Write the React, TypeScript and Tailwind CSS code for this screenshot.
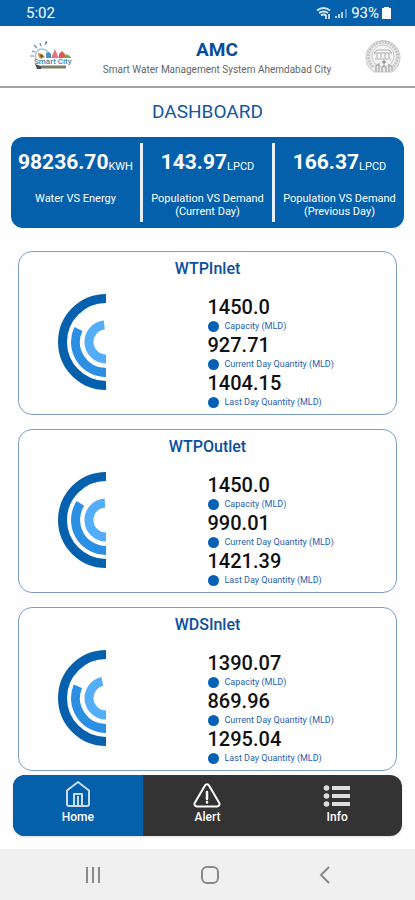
import React from "react";

type Station = { name: string; capacity: string; current: string; last: string };

const summary = [
  { value: "98236.70", unit: "KWH", lines: ["Water VS Energy"] },
  { value: "143.97", unit: "LPCD", lines: ["Population VS Demand", "(Current Day)"] },
  { value: "166.37", unit: "LPCD", lines: ["Population VS Demand", "(Previous Day)"] },
];

const stations: Station[] = [
  { name: "WTPInlet", capacity: "1450.0", current: "927.71", last: "1404.15" },
  { name: "WTPOutlet", capacity: "1450.0", current: "990.01", last: "1421.39" },
  { name: "WDSInlet", capacity: "1390.07", current: "869.96", last: "1295.04" },
];

// Arc running clockwise from the bottom of the half ring
function arc(radius: number, share: number) {
  const a = Math.PI * share;
  const x = 48 - radius * Math.sin(a);
  const y = 48 + radius * Math.cos(a);
  return `M48 ${48 + radius} A${radius} ${radius} 0 0 1 ${x.toFixed(2)} ${y.toFixed(2)}`;
}

function HalfRings({ station }: { station: Station }) {
  const capacity = Number(station.capacity);
  return (
    <svg width="48" height="96" viewBox="0 0 48 96" fill="none" strokeWidth="9" role="img" aria-label={station.name}>
      <path d={arc(43.5, 1)} stroke="#0560ad" />
      <path d={arc(30.5, Number(station.current) / capacity)} stroke="#2b8fe3" />
      <path d={arc(17, Number(station.last) / capacity)} stroke="#53adf8" />
    </svg>
  );
}

function Reading({ value, label }: { value: string; label: string }) {
  return (
    <div>
      <dd className="text-xl leading-6 font-medium text-[#111111]">{value}</dd>
      <dt className="flex h-[14px] items-center gap-[6px] text-[9px] leading-3 text-[#1f5fae]">
        <span className="size-[11px] shrink-0 rounded-full bg-[#0560b4]" />
        {label}
      </dt>
    </div>
  );
}

function StationCard({ station }: { station: Station }) {
  return (
    <section className="h-[164px] rounded-[14px] border border-[#7d9cc8] bg-white pt-[7px]">
      <h2 className="text-center text-base leading-5 font-medium text-[#0b4fa0]">{station.name}</h2>
      <div className="mt-[15px] grid grid-cols-2">
        <div className="pl-[39px]">
          <HalfRings station={station} />
        </div>
        <dl className="pt-px">
          <Reading value={station.capacity} label="Capacity (MLD)" />
          <Reading value={station.current} label="Current Day Quantity (MLD)" />
          <Reading value={station.last} label="Last Day Quantity (MLD)" />
        </dl>
      </div>
    </section>
  );
}

function CityLogo() {
  return (
    <svg width="44" height="30" viewBox="0 0 44 30" fill="none" aria-hidden="true">
      <path d="M2 10l3 1M4 4l3 3M10 2l1 3M17 1l-2 3M0 15h4" stroke="#6b8fa8" strokeWidth="1.2" />
      <path d="M6 18c-2-5 1-10 6-10 3 0 5 1 6 4" stroke="#a9c9dc" strokeWidth="1.4" />
      <path d="M15 1l2-1-1 3z" fill="#45738c" />
      <path d="M8 12l4 1 3 3-4 2c-2-1-3-3-3-6z" fill="#e58535" />
      <path d="M10 13l4 2-3 2z" fill="#36713a" />
      <path d="M16 17v-5l3-1 2 2v4z" fill="#4c91bd" />
      <path d="M21 17l4-9 4 9z" fill="#e27883" />
      <path d="M29 17v-4l3-3 3 3v4z" fill="#d75e57" />
      <path d="M34 17l2-4 4 2 1 2z" fill="#76aa53" />
      <text x="4" y="23" fontFamily="Roboto, sans-serif" fontSize="8" fontWeight="500" fill="#3f7fae">Smart City</text>
      <path d="M5 23l2 5h4v-3z" fill="#465154" />
      <path d="M11 24.500h25v3H11z" fill="#7b7f61" />
    </svg>
  );
}

function Seal() {
  return (
    <svg width="38" height="38" viewBox="0 0 38 38" fill="none" stroke="#b0b0b0" aria-hidden="true">
      <path d="M10 35A17 17 0 1 1 28 35z" fill="#ececec" stroke="#c8c8c8" />
      <path d="M9 30A14.500 14.500 0 1 1 29 30" strokeWidth="3" strokeDasharray="2 1" stroke="#c6c6c6" />
      <circle cx="19" cy="19" r="11" fill="#f4f4f4" stroke="#cccccc" />
      <path d="M10 16l3-3h12l3 3zM13 16v5M17 16v5M21 16v5M25 16v5M11 22h16" />
      <path d="M12 35v-6l3-2v8M18 35v-4l2-3 2 3v4M25 35v-7l3 2v4" strokeWidth="1.500" />
      <path d="M18 25l2-2 2 2-2 2z" fill="#999999" />
    </svg>
  );
}

function StatusIcons() {
  return (
    <svg width="31" height="14" viewBox="0 0 31 14" fill="none" aria-hidden="true">
      <path d="M1 4.500q6.500-5 13 0M3 7q4.500-3 9 0M5 9.500q2.500-2 5 0" stroke="#d7e6f4" strokeWidth="2" />
      <path d="M10 13V9M13 13V8" stroke="#ffffff" strokeWidth="1.500" />
      <path d="M20 12v-2M23 12V8M26 12V6" stroke="#c7dcef" strokeWidth="1.800" />
      <path d="M30 12V3" stroke="#5e99cb" strokeWidth="2" />
    </svg>
  );
}

function HomeIcon() {
  return (
    <svg width="28" height="28" viewBox="0 0 28 28" fill="none" stroke="#c6ddf5" strokeWidth="2" strokeLinejoin="round" aria-hidden="true">
      <path d="M3 10.500L14 2l11 8.500V24a2 2 0 0 1-2 2H5a2 2 0 0 1-2-2z" />
      <path d="M10 26V14h8v12M14 16v10" />
    </svg>
  );
}

function AlertIcon() {
  return (
    <svg width="28" height="28" viewBox="0 0 28 28" fill="none" stroke="#ffffff" strokeWidth="2" strokeLinecap="round" strokeLinejoin="round" aria-hidden="true">
      <path d="M12 5.500a2.300 2.300 0 0 1 4 0L26 22.500a2.500 2.500 0 0 1-2 4H4a2.500 2.500 0 0 1-2-4z" />
      <path d="M14 12v7M14 22v.5" strokeWidth="2.500" />
    </svg>
  );
}

function ListIcon() {
  return (
    <svg width="28" height="28" viewBox="0 0 28 28" fill="#dedede" aria-hidden="true">
      <circle cx="3.500" cy="8" r="2.800" />
      <circle cx="3.500" cy="16" r="2.800" />
      <circle cx="3.500" cy="24" r="2.800" />
      <path d="M9 6h18v4H9zM9 14h18v4H9zM9 22h18v4H9z" />
    </svg>
  );
}

export default function App() {
  return (
    <div className="flex min-h-screen flex-col bg-[#fefefe] font-['Roboto','Liberation_Sans',sans-serif]">
      <div className="flex h-[26px] items-center justify-between bg-[#0560ac] pr-6 pl-[26px] text-[15px] text-white">
        <span>5:02</span>
        <span className="flex items-center">
          <StatusIcons />
          <span className="ml-1">93%</span>
          <svg className="ml-[3px]" width="9" height="12" viewBox="0 0 9 12" fill="#ffffff" aria-hidden="true">
            <path d="M2 0h5v1h2v11H0V1h2z" />
          </svg>
        </span>
      </div>

      <header className="flex h-[62px] items-center justify-between border-b-2 border-[#a2a2a2] bg-white pr-[13px] pl-[30px]">
        <CityLogo />
        <div className="pt-1 pr-1 text-center">
          <h1 className="text-[19px] leading-6 font-bold text-[#084c9e]">AMC</h1>
          <p className="text-[10px] leading-4 whitespace-nowrap text-[#666666]">Smart Water Management System Ahemdabad City</p>
        </div>
        <Seal />
      </header>

      <main>
        <h2 className="mt-3 text-center text-[19px] leading-6 text-[#1557a0]">DASHBOARD</h2>

        <section className="mx-[11px] mt-[13px] flex h-[91px] items-stretch rounded-xl bg-[#0560ac] py-[6px] text-white">
          {summary.map((item, i) => (
            <React.Fragment key={item.unit + i}>
              {i > 0 && <div className="w-[3px] bg-[#e6f0fa]" />}
              <div className="flex flex-1 flex-col items-center pt-[7px] whitespace-nowrap">
                <p className="text-[21px] leading-6 font-bold">
                  {item.value}
                  <span className="inline-block translate-y-px text-[11px] font-normal">{item.unit}</span>
                </p>
                <p className="mt-[14px] text-center text-[11px] leading-[13px]">
                  {item.lines.map((line) => (
                    <span key={line} className="block">{line}</span>
                  ))}
                </p>
              </div>
            </React.Fragment>
          ))}
        </section>

        <div className="mx-[18px] mt-[23px] flex flex-col gap-[14px]">
          {stations.map((station) => (
            <StationCard key={station.name} station={station} />
          ))}
        </div>
      </main>

      <nav className="mx-[13px] mt-1 grid h-[61px] grid-cols-3 overflow-hidden rounded-xl bg-[#333333] text-xs text-white shadow">
        <button className="flex flex-col items-center bg-[#0560ac] pt-[5px] font-medium">
          <HomeIcon />
          <span className="leading-[18px]">Home</span>
        </button>
        <button className="flex flex-col items-center pt-[5px] font-medium">
          <AlertIcon />
          <span className="leading-[18px]">Alert</span>
        </button>
        <button className="flex flex-col items-center pt-[5px] font-medium">
          <ListIcon />
          <span className="leading-[18px]">Info</span>
        </button>
      </nav>

      <div className="mt-auto flex h-[51px] items-center justify-between bg-[#f0f0f0] pr-20 pl-[84px]">
        <button aria-label="Recent apps">
          <svg width="20" height="20" viewBox="0 0 20 20" stroke="#898989" strokeWidth="2">
            <path d="M3 2v16M9 2v16M15 2v16" />
          </svg>
        </button>
        <button aria-label="Home screen">
          <svg width="20" height="20" viewBox="0 0 20 20" fill="none" stroke="#898989" strokeWidth="2">
            <rect x="2" y="2" width="16" height="16" rx="5" />
          </svg>
        </button>
        <button aria-label="Back">
          <svg width="20" height="20" viewBox="0 0 20 20" fill="none" stroke="#898989" strokeWidth="2">
            <path d="M14 2l-8 8 8 8" />
          </svg>
        </button>
      </div>
    </div>
  );
}
